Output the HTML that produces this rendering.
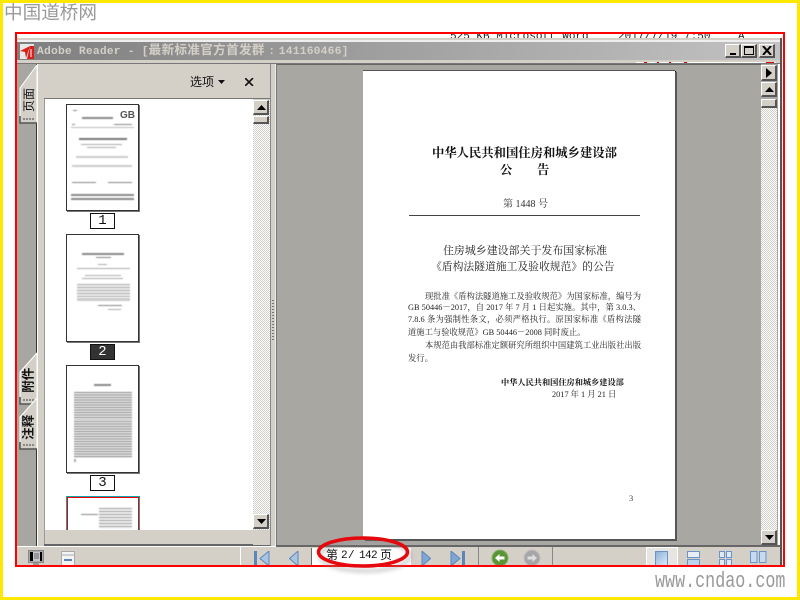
<!DOCTYPE html>
<html lang="zh">
<head>
<meta charset="utf-8">
<title>Adobe Reader</title>
<style>
html,body{margin:0;padding:0;width:800px;height:600px;overflow:hidden;background:#fff}
body{position:relative;font-family:"Liberation Sans","Noto Sans CJK SC",sans-serif}
.a{position:absolute;box-sizing:border-box}
.t{position:absolute;white-space:nowrap;line-height:1;color:#111}
.s{font-family:"Liberation Serif","Noto Serif CJK SC",serif}
.btn{position:absolute;box-sizing:border-box;background:#d4d0c8;border-top:1px solid #fff;border-left:1px solid #fff;border-right:2px solid #555;border-bottom:2px solid #555}
.chk{background-color:#fff;background-image:linear-gradient(45deg,#d0cec8 25%,transparent 25%,transparent 75%,#d0cec8 75%),linear-gradient(45deg,#d0cec8 25%,transparent 25%,transparent 75%,#d0cec8 75%);background-size:2px 2px;background-position:0 0,1px 1px}
.th{position:absolute;box-sizing:border-box;left:66px;width:73px;background:#fff;border:1px solid #333;box-shadow:1px 1px 0 #777}
.lb{position:absolute;box-sizing:border-box;left:90px;width:25px;height:16px;border:1px solid #111;background:#fff;font:14px/14px "Liberation Mono",monospace;text-align:center;color:#111}
.bar{position:absolute;background:#888;filter:blur(.5px)}
.pg{filter:blur(.3px)}
.j{position:absolute;left:408px;width:233px;font:8.3px/1 "Liberation Serif","Noto Serif CJK SC",serif;color:#222;text-align:justify;text-align-last:justify;white-space:nowrap}
.tab{position:absolute;white-space:nowrap;line-height:1;color:#111;transform:rotate(-90deg);transform-origin:center center}
.n{position:absolute;top:549px;line-height:14px;color:#111;font-family:"Liberation Mono","Noto Sans CJK SC",monospace;white-space:nowrap}
</style>
</head>
<body>
<!-- yellow frame -->
<div class="a" style="left:0;top:0;width:800px;height:600px;border:3px solid #ffe800"></div>
<div class="t" style="left:4px;top:3px;font-family:'WenQuanYi Zen Hei','Noto Sans CJK SC',sans-serif;font-size:18.6px;color:#999">中国道桥网</div>
<div class="t" style="left:655px;top:571px;font:22px/1 'Liberation Mono',monospace;color:#999;transform-origin:0 0;transform:scaleX(.76)">www.cndao.com</div>

<!-- window -->
<div class="a" style="left:17px;top:34px;width:766px;height:532px;background:#fff"></div>
<div class="a" style="left:440px;top:34px;width:320px;height:5px;overflow:hidden">
  <div class="t" style="left:10px;top:-2px;font:11px/1 'Liberation Mono',monospace;color:#222">525 KB  Microsoft Word</div>
  <div class="t" style="left:178px;top:-2px;font:11px/1 'Liberation Mono',monospace;color:#222">2017/7/19 7:50</div>
  <div class="t" style="left:298px;top:-2px;font:11px/1 'Liberation Mono',monospace;color:#222">A</div>
</div>
<div class="a" style="left:17px;top:38px;width:763px;height:2px;background:#d4d0c8"></div>
<div class="a" style="left:17px;top:40px;width:763px;height:2px;background:#eee"></div>
<div class="a" style="left:780px;top:38px;width:2px;height:528px;background:#555"></div>
<div class="a" style="left:17px;top:42px;width:763px;height:18px;background:linear-gradient(90deg,#7f7f7f,#c2c2c2)"></div>
<div class="a" style="left:17px;top:60px;width:763px;height:3px;background:#d4d0c8"></div>
<div class="a" style="left:17px;top:63px;width:763px;height:1px;background:#777"></div>
<div class="a" style="left:636px;top:62px;width:140px;height:1px;background:#fff"></div>
<div class="a" style="left:644px;top:62px;width:3px;height:1px;background:#e00"></div>
<div class="a" style="left:657px;top:62px;width:2px;height:1px;background:#e00"></div>
<div class="a" style="left:669px;top:62px;width:2px;height:1px;background:#e00"></div>
<div class="a" style="left:684px;top:62px;width:3px;height:1px;background:#e00"></div>
<div class="a" style="left:766px;top:62px;width:8px;height:1px;background:#e00"></div>
<svg class="a" style="left:20px;top:44px" width="14" height="15" viewBox="0 0 14 15"><rect width="14" height="15" fill="#e8e8e8"/><path d="M0 7 L10 2 L6 14 L5 8 Z" fill="#d8201c"/><path d="M10 2h4v13H7Z" fill="#d8201c"/><path d="M11 5v8" stroke="#fff"/></svg>
<div class="t" style="left:37px;top:45px;font:bold 11.3px/13px 'Liberation Mono','Noto Sans CJK SC',monospace;color:#d4d0c8;letter-spacing:.2px">Adobe Reader - [<span style="font-size:12.5px;letter-spacing:.4px">最新标准官方首发群</span><span style="display:inline-block;width:14px;text-align:center">:</span>141160466]</div>
<div class="btn" style="left:725px;top:44px;width:16px;height:14px"><div class="a" style="left:4px;top:8px;width:6px;height:2px;background:#000"></div></div>
<div class="btn" style="left:741px;top:44px;width:16px;height:14px"><div class="a" style="left:2px;top:1px;width:10px;height:9px;border:1px solid #000;border-top-width:2px"></div></div>
<div class="btn" style="left:759px;top:44px;width:16px;height:14px"><svg class="a" style="left:2px;top:1px" width="10" height="9"><path d="M1 0l8 9M9 0L1 9" stroke="#000" stroke-width="2"/></svg></div>

<!-- left column -->
<div class="a" style="left:17px;top:64px;width:20px;height:482px;background:#a8a6a1"></div>
<div class="a" style="left:36px;top:64px;width:1px;height:482px;background:#333"></div>
<div class="a" style="left:37px;top:64px;width:1px;height:482px;background:#fff"></div>
<svg class="a" style="left:19px;top:64px" width="19" height="60"><path d="M1 59V24L18 1V59Z" fill="#d4d0c8" stroke="#fff"/><path d="M1 52v7h17" fill="none" stroke="#555" stroke-width="1.5"/><path d="M4 55h11" stroke="#888" stroke-width="2" stroke-dasharray="2 1"/></svg>
<div class="tab" style="left:16.500px;top:94px;width:24px;height:12px;font-size:12px">页面</div>
<svg class="a" style="left:19px;top:352px" width="19" height="53"><path d="M1 52V20L18 1V52Z" fill="#d4d0c8" stroke="#fff"/><path d="M1 45v7h17" fill="none" stroke="#555" stroke-width="1.5"/><path d="M4 48h11" stroke="#888" stroke-width="2" stroke-dasharray="2 1"/></svg>
<svg class="a" style="left:19px;top:397px" width="19" height="53"><path d="M1 52V20L18 1V52Z" fill="#d4d0c8" stroke="#fff"/><path d="M1 45v7h17" fill="none" stroke="#555" stroke-width="1.5"/><path d="M4 48h11" stroke="#888" stroke-width="2" stroke-dasharray="2 1"/></svg>
<div class="tab" style="left:16px;top:374px;width:25px;height:12.500px;font-size:12.500px;font-weight:bold">附件</div>
<div class="tab" style="left:16px;top:421px;width:25px;height:12.500px;font-size:12.500px;font-weight:bold">注释</div>

<!-- thumbnail panel -->
<div class="a" style="left:38px;top:64px;width:232px;height:482px;background:#d4d0c8"></div>
<div class="a" style="left:44px;top:98px;width:226px;height:1px;background:#777"></div>
<div class="a" style="left:44px;top:99px;width:209px;height:431px;background:#fff"></div>
<div class="a" style="left:44px;top:99px;width:1px;height:445px;background:#999"></div>
<div class="a" style="left:44px;top:544px;width:226px;height:2px;background:#666"></div>
<div class="t" style="left:190px;top:76px;font-size:12px;color:#111">选项</div>
<svg class="a" style="left:218px;top:80px" width="8" height="4"><path d="M0 0h7L3.5 4Z" fill="#111"/></svg>
<svg class="a" style="left:245px;top:78px" width="9" height="8"><path d="M0 0l8 8M8 0L0 8" stroke="#111" stroke-width="1.6"/></svg>

<!-- thumb scrollbar -->
<div class="a chk" style="left:253px;top:100px;width:17px;height:445px"></div>
<div class="btn" style="left:253px;top:100px;width:16px;height:15px"><svg class="a" style="left:3px;top:4px" width="9" height="5"><path d="M0 5h9L4.5 0Z" fill="#000"/></svg></div>
<div class="btn" style="left:253px;top:116px;width:16px;height:8px"></div>
<div class="btn" style="left:253px;top:514px;width:16px;height:15px"><svg class="a" style="left:3px;top:4px" width="9" height="5"><path d="M0 0h9L4.5 5Z" fill="#000"/></svg></div>
<div class="a" style="left:253px;top:530px;width:17px;height:15px;background:#d4d0c8"></div>

<!-- thumb 1 -->
<div class="th" style="top:104px;height:107px"></div>
<div class="bar" style="left:73px;top:110px;width:4px;height:1px"></div>
<div class="bar" style="left:82px;top:117px;width:31px;height:1.5px"></div>
<div class="t" style="left:120px;top:111px;font:bold 10px/10px 'Liberation Sans';color:#555">GB</div>
<div class="bar" style="left:72px;top:124px;width:3px;height:1px"></div>
<div class="bar" style="left:114px;top:124px;width:18px;height:1px"></div>
<div class="bar" style="left:71px;top:127px;width:63px;height:1px;background:#bbb"></div>
<div class="bar" style="left:79px;top:138px;width:48px;height:2px;background:#777"></div>
<div class="bar" style="left:81px;top:144px;width:41px;height:1px;background:#aaa"></div>
<div class="bar" style="left:87px;top:147px;width:29px;height:1px;background:#aaa"></div>
<div class="bar" style="left:76px;top:156px;width:52px;height:2px;background:#ccc"></div>
<div class="bar" style="left:72px;top:165px;width:60px;height:2px;background:#ccc"></div>
<div class="bar" style="left:72px;top:182px;width:24px;height:1px;background:#888"></div>
<div class="bar" style="left:108px;top:182px;width:24px;height:1px;background:#888"></div>
<div class="bar" style="left:71px;top:194px;width:63px;height:1.5px"></div>
<div class="bar" style="left:71px;top:198px;width:63px;height:1.5px"></div>
<div class="lb" style="top:213px">1</div>

<!-- thumb 2 -->
<div class="th" style="top:234px;height:108px"></div>
<div class="bar" style="left:82px;top:253px;width:42px;height:1.5px"></div>
<div class="bar" style="left:96px;top:257px;width:15px;height:1px"></div>
<div class="bar" style="left:98px;top:264px;width:9px;height:1px;background:#aaa"></div>
<div class="bar" style="left:77px;top:268px;width:53px;height:1px;background:#aaa"></div>
<div class="bar" style="left:85px;top:275px;width:36px;height:1px;background:#aaa"></div>
<div class="bar" style="left:82px;top:278px;width:41px;height:1px;background:#aaa"></div>
<div class="bar" style="left:77px;top:284px;width:53px;height:13px;background:repeating-linear-gradient(180deg,#aaa 0 1px,#eee 1px 3px)"></div>
<div class="bar" style="left:77px;top:298px;width:53px;height:3px;background:#ccc"></div>
<div class="bar" style="left:98px;top:305px;width:24px;height:1px"></div>
<div class="bar" style="left:108px;top:309px;width:13px;height:1px;background:#aaa"></div>
<div class="a" style="left:90px;top:344px;width:25px;height:16px;background:#333;border:1px solid #111;color:#fff;font:14px/14px 'Liberation Mono',monospace;text-align:center">2</div>

<!-- thumb 3 -->
<div class="th" style="top:365px;height:108px"></div>
<div class="bar" style="left:94px;top:384px;width:17px;height:1.5px"></div>
<div class="bar" style="left:74px;top:392px;width:58px;height:28px;background:repeating-linear-gradient(180deg,#888 0 1px,#eee 1px 2.5px)"></div>
<div class="bar" style="left:74px;top:421px;width:58px;height:37px;background:repeating-linear-gradient(180deg,#888 0 1px,#eee 1px 2.5px)"></div>
<div class="bar" style="left:74px;top:459px;width:2px;height:3px;background:#aaa"></div>
<div class="lb" style="top:475px">3</div>

<!-- thumb 4 -->
<div class="a" style="left:66px;top:496px;width:74px;height:34px;border:1px solid #16a5a8;border-bottom:0;background:#fff"></div>
<div class="a" style="left:67px;top:497px;width:72px;height:33px;border:1px solid #e00;border-bottom:0;background:#fff"></div>
<div class="bar" style="left:81px;top:514px;width:17px;height:1px"></div>
<div class="bar" style="left:99px;top:508px;width:33px;height:21px;background:repeating-linear-gradient(180deg,#999 0 1px,#f4f4f4 1px 3px)"></div>

<!-- splitter -->
<div class="a" style="left:270px;top:64px;width:6px;height:482px;background:#d4d0c8;border-left:1px solid #888;border-right:1px solid #eee"></div>
<div class="a" style="left:272px;top:300px;width:2px;height:40px;background:repeating-linear-gradient(180deg,#777 0 1px,transparent 1px 3px)"></div>

<!-- main area -->
<div class="a" style="left:276px;top:64px;width:485px;height:481px;background:#a9a7a2;border-top:1px solid #666;border-left:1px solid #777"></div>
<div class="a" style="left:276px;top:545px;width:504px;height:2px;background:#666"></div>
<div class="a" style="left:363px;top:70px;width:312px;height:469px;background:#fff;border-top:1px solid #555;box-shadow:2px 2px 0 #555,1px 1px 0 #000"></div>

<!-- page content -->
<div class="pg">
<div class="t s" style="left:432px;top:147px;font-size:12.33px;font-weight:bold;color:#111">中华人民共和国住房和城乡建设部</div>
<div class="t s" style="left:500px;top:164px;font-size:12.3px;font-weight:bold;color:#111">公</div>
<div class="t s" style="left:537px;top:164px;font-size:12.3px;font-weight:bold;color:#111">告</div>
<div class="t s" style="left:503px;top:200px;font-size:10px;color:#333">第 1448 号</div>
<div class="a" style="left:409px;top:215px;width:231px;height:1px;background:#444"></div>
<div class="t s" style="left:443px;top:245.5px;font-size:10.95px;color:#222">住房城乡建设部关于发布国家标准</div>
<div class="t s" style="left:431px;top:262px;font-size:10.8px;color:#222">《盾构法隧道施工及验收规范》的公告</div>
<div class="j" style="left:425px;width:216px;top:293px">现批准《盾构法隧道施工及验收规范》为国家标准，编号为</div>
<div class="j" style="top:304px">GB 50446－2017，自 2017 年 7 月 1 日起实施。其中，第 3.0.3、</div>
<div class="j" style="top:316px">7.8.6 条为强制性条文，必须严格执行。原国家标准《盾构法隧</div>
<div class="j" style="top:329px;left:408px;width:176px">道施工与验收规范》GB 50446－2008 同时废止。</div>
<div class="j" style="left:425px;width:216px;top:342px">本规范由我部标准定额研究所组织中国建筑工业出版社出版</div>
<div class="t s" style="left:408px;top:355px;font-size:8.3px;color:#222">发行。</div>
<div class="t s" style="left:501px;top:379px;font-size:8.2px;font-weight:bold;color:#111">中华人民共和国住房和城乡建设部</div>
<div class="t s" style="left:552px;top:391px;font-size:8.3px;color:#222">2017 年 1 月 21 日</div>
<div class="t s" style="left:629px;top:494px;font-size:8.5px;color:#444">3</div>
</div>

<!-- right scrollbar -->
<div class="a" style="left:761px;top:64px;width:17px;height:481px;background:#a9a7a2"></div>
<div class="a chk" style="left:761px;top:108px;width:16px;height:422px"></div>
<div class="btn" style="left:761px;top:65px;width:16px;height:16px"><svg class="a" style="left:4px;top:2px" width="6" height="10"><path d="M0 0l6 5-6 5Z" fill="#000"/></svg></div>
<div class="btn" style="left:761px;top:82px;width:16px;height:15px"><svg class="a" style="left:3px;top:4px" width="9" height="5"><path d="M0 5h9L4.5 0Z" fill="#000"/></svg></div>
<div class="btn" style="left:761px;top:99px;width:16px;height:9px"></div>
<div class="btn" style="left:761px;top:530px;width:16px;height:15px"><svg class="a" style="left:3px;top:4px" width="9" height="5"><path d="M0 0h9L4.5 5Z" fill="#000"/></svg></div>

<!-- status bar -->
<div class="a" style="left:17px;top:547px;width:763px;height:19px;background:#d4d0c8"></div>
<div class="a" style="left:240px;top:547px;width:1px;height:19px;background:#fff"></div>
<div class="a" style="left:478px;top:547px;width:1px;height:19px;background:#888"></div>
<div class="a" style="left:552px;top:547px;width:1px;height:19px;background:#888"></div>
<svg class="a" style="left:28px;top:550px" width="17" height="16"><rect x=".5" y=".5" width="15" height="12" fill="#aaa" stroke="#888"/><rect x="2" y="2" width="12" height="9" fill="#000"/><rect x="5" y="2" width="7" height="9" fill="#c8c8c8"/><path d="M6 4h5M6 6h5M6 8h5" stroke="#667"/><rect x="5" y="13" width="6" height="3" fill="#999"/></svg>
<svg class="a" style="left:61px;top:551px" width="15" height="15"><rect x=".5" y=".5" width="13" height="15" fill="#f4f4f4" stroke="#aaa"/><path d="M1 4h12" stroke="#aaa"/><path d="M3 9h8" stroke="#5b86b8" stroke-width="2"/></svg>
<svg class="a" style="left:254px;top:551px" width="16" height="15"><rect width="3" height="15" fill="#5b86b8"/><path d="M15 0V15L6 7.5Z" fill="#a9c4e2" stroke="#5b86b8"/></svg>
<svg class="a" style="left:289px;top:551px" width="10" height="15"><path d="M9 0V15L0.5 7.5Z" fill="#a9c4e2" stroke="#5b86b8"/></svg>
<svg class="a" style="left:421px;top:551px" width="10" height="15"><path d="M1 0V15L9.5 7.5Z" fill="#7fa6d4" stroke="#5b86b8"/></svg>
<svg class="a" style="left:450px;top:551px" width="16" height="15"><path d="M1 0V15L10 7.5Z" fill="#7fa6d4" stroke="#5b86b8"/><rect x="12" width="3" height="15" fill="#5b86b8"/></svg>
<svg class="a" style="left:491px;top:549px" width="18" height="18"><circle cx="9" cy="9" r="8" fill="#5a9434" stroke="#8ab070"/><path d="M4 9l4.5-4v2.5h5v3h-5V13Z" fill="#fff"/></svg>
<svg class="a" style="left:523px;top:549px" width="18" height="18"><circle cx="9" cy="9" r="8" fill="#a6a6a6" stroke="#c0c0c0"/><path d="M14 9L9.5 5v2.5h-5v3h5V13Z" fill="#ddd"/></svg>
<div class="a" style="left:646px;top:547px;width:32px;height:19px;background:#e6e5e1;border:1px solid #fff;border-bottom:0"></div>
<div class="a" style="left:655px;top:551px;width:13px;height:15px;background:linear-gradient(135deg,#8fb3dc,#dce8f5);border:1px solid #6a94c6"></div>
<svg class="a" style="left:687px;top:551px" width="14" height="15"><rect x=".5" y=".5" width="12" height="6" fill="#e8eef6" stroke="#6a94c6"/><rect x=".5" y="8.5" width="12" height="7" fill="#bcd3ec" stroke="#6a94c6"/></svg>
<svg class="a" style="left:719px;top:551px" width="14" height="15"><g fill="#e0e9f4" stroke="#6a94c6"><rect x=".5" y=".5" width="5" height="6"/><rect x="7.5" y=".5" width="5" height="6"/><rect x=".5" y="8.5" width="5" height="7"/><rect x="7.5" y="8.5" width="5" height="7"/></g></svg>
<svg class="a" style="left:750px;top:551px" width="17" height="13"><g fill="#c6daf0" stroke="#6a94c6"><rect x=".5" y=".5" width="6.5" height="11"/><rect x="9.5" y=".5" width="6.5" height="11"/></g></svg>

<!-- page number field -->
<div class="a" style="left:311px;top:548px;width:100px;height:18px;background:#fff;border-left:1px solid #666"></div>
<span class="n" style="left:326px;font-size:12px">第</span>
<span class="n" style="left:341px;font-size:11px">2</span>
<span class="n" style="left:348px;font-size:11px">/</span>
<span class="n" style="left:359px;font-size:11px;letter-spacing:-.6px">142</span>
<span class="n" style="left:380px;font-size:12px">页</span>

<!-- red rectangle -->
<div class="a" style="left:15px;top:32px;width:770px;height:535px;border:2px solid #f00"></div>

<!-- red ellipse -->
<svg class="a" style="left:310px;top:530px;overflow:visible" width="110" height="50">
<ellipse cx="55" cy="24" rx="45" ry="15" fill="none" stroke="#888" stroke-width="3" opacity=".5" style="filter:blur(2px)" transform="translate(0 2)"/>
<ellipse cx="53" cy="22" rx="44.5" ry="14" fill="none" stroke="#e5080c" stroke-width="3.5"/>
</svg>
</body>
</html>
